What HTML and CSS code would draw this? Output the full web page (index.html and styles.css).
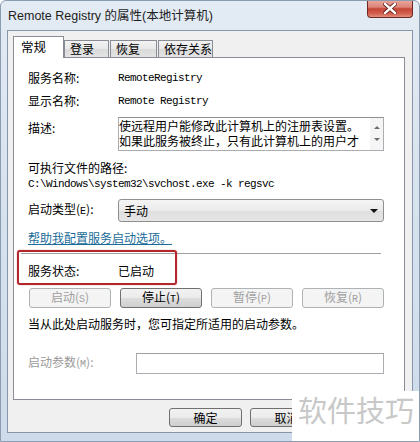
FILE: index.html
```html
<!DOCTYPE html>
<html lang="zh-CN">
  <head>
    <meta charset="UTF-8" />
    <title>Remote Registry 的属性</title>
    <link rel="stylesheet" href="styles.css">
  </head>
  <body>
    <div class="window">
      <div class="titlebar">
        <span class="title">Remote Registry 的属性(本地计算机)</span>
        <span class="close">
          <svg width="14" height="11" viewBox="0 0 14 11">
            <path d="M2 1 L12 10 M12 1 L2 10" stroke="#5a1a14" stroke-width="4" stroke-linecap="square" />
            <path d="M2 1 L12 10 M12 1 L2 10" stroke="#fff" stroke-width="2.4" stroke-linecap="square" />
          </svg>
        </span>
      </div>

      <div class="client">
        <div class="tabs">
          <div class="tab active">常规</div>
          <div class="tab t-login">登录</div>
          <div class="tab t-recover">恢复</div>
          <div class="tab t-deps">依存关系</div>
        </div>

        <div class="panel">
          <div class="row r-name">
            <span class="label">服务名称:</span>
            <span class="mono">RemoteRegistry</span>
          </div>
          <div class="row r-display">
            <span class="label">显示名称:</span>
            <span class="mono">Remote Registry</span>
          </div>
          <div class="row r-desc">
            <span class="label">描述:</span>
            <div class="textbox">
              <div class="textbox-text">
                <div class="text-line">使远程用户能修改此计算机上的注册表设置。</div>
                <div class="text-line">如果此服务被终止，只有此计算机上的用户才</div>
              </div>
              <div class="scroll">
                <span class="arrow-up"></span>
                <span class="arrow-down"></span>
              </div>
            </div>
          </div>
          <div class="row r-pathlabel">可执行文件的路径:</div>
          <div class="row r-path mono">C:\Windows\system32\svchost.exe -k regsvc</div>
          <div class="row r-type">
            <span class="label">启动类型(<span class="mono-inline">E</span>):</span>
            <div class="combo">
              <span>手动</span>
              <span class="arrow-down dark"></span>
            </div>
          </div>
          <div class="row r-link"><a class="link">帮助我配置服务启动选项。</a></div>
          <div class="separator"></div>
          <div class="row r-status">
            <span class="label">服务状态:</span>
            <span>已启动</span>
          </div>
          <div class="buttons">
            <button class="btn disabled">启动(<span class="mono-inline">S</span>)</button>
            <button class="btn">停止(<span class="mono-inline">T</span>)</button>
            <button class="btn disabled">暂停(<span class="mono-inline">P</span>)</button>
            <button class="btn disabled">恢复(<span class="mono-inline">R</span>)</button>
          </div>
          <div class="row r-hint">当从此处启动服务时，您可指定所适用的启动参数。</div>
          <div class="row r-params">
            <span class="label grey">启动参数(<span class="mono-inline">M</span>):</span>
            <div class="input"></div>
          </div>

          <div class="highlight"></div>
        </div>

        <div class="footer">
          <button class="btn big">确定</button>
          <button class="btn big">取消</button>
        </div>
      </div>

      <div class="watermark">软件技巧</div>
    </div>
  </body>
</html>
```

FILE: styles.css
```css
* {
  box-sizing: border-box;
}

body {
  margin: 0;
  background-color: #fff;
  font-family: "Noto Sans CJK SC", "Liberation Sans", sans-serif;
  font-size: 12px;
  color: #000;
}

.window {
  position: relative;
  width: 420px;
  height: 442px;
  overflow: hidden;
  background: linear-gradient(180deg, #e3ebf4 0%, #d8e3ef 40%, #cddbea 100%);
  border: 1px solid #8c9cb0;
  border-radius: 6px 6px 0 0;
}

/* 标题栏 */
.titlebar {
  display: flex;
  justify-content: space-between;
  align-items: flex-start;
  height: 29px;
  padding-left: 7px;
}

.title {
  font-family: "Liberation Sans", "Noto Sans CJK SC", sans-serif;
  font-size: 12.5px;
  line-height: 30px;
  color: #1e1e1e;
}

.close {
  display: flex;
  align-items: center;
  justify-content: center;
  width: 46px;
  height: 18px;
  margin-right: 6px;
  margin-top: -1px;
  background: linear-gradient(180deg, #e9aa9f 0%, #dd8377 42%, #c54536 52%, #d4604f 80%, #e38f7c 100%);
  border: 1px solid #6d2a22;
  border-top: none;
  border-radius: 0 0 4px 4px;
}

/* 客户区 */
.client {
  width: 406px;
  height: 403px;
  margin-left: 6px;
  background-color: #f0f0f0;
  border: 1px solid #8796aa;
}

.tabs {
  display: flex;
  align-items: flex-end;
  height: 26px;
  padding-left: 5px;
  padding-top: 4px;
}

.tab {
  height: 17px;
  padding-left: 5px;
  line-height: 16px;
  background: linear-gradient(180deg, #f3f3f3 0%, #e8e8e8 50%, #dadada 51%, #e4e4e4 100%);
  border: 1px solid #898c95;
  border-bottom: none;
  margin-left: 1px;
}

.tab.active {
  position: relative;
  z-index: 1;
  width: 51px;
  height: 22px;
  margin-left: 0;
  margin-bottom: -1px;
  padding-left: 7px;
  line-height: 20px;
  background: #fff;
  font-size: 12.5px;
}

.t-login {
  width: 45px;
  margin-left: 0;
}

.t-recover {
  width: 47px;
}

.t-deps {
  width: 55px;
}

/* 常规面板 */
.panel {
  position: relative;
  width: 392px;
  height: 343px;
  margin-left: 5px;
  padding-left: 14px;
  background-color: #fff;
  border: 1px solid #898c95;
}

.row {
  display: flex;
  align-items: center;
  height: 16px;
  line-height: 16px;
  white-space: nowrap;
}

.label {
  width: 90px;
  flex-shrink: 0;
}

.mono {
  font-family: "Liberation Mono", monospace;
  font-size: 11px;
  letter-spacing: -0.6px;
}

.mono-inline {
  font-family: "Liberation Mono", monospace;
  font-size: 10px;
}

.r-name {
  margin-top: 12px;
}

.r-display {
  margin-top: 7px;
}

.r-desc {
  align-items: flex-start;
  height: 34px;
  margin-top: 8px;
}

.r-desc .label {
  padding-top: 3px;
}

.textbox {
  display: flex;
  width: 266px;
  height: 34px;
  border: 1px solid #abadb3;
  border-top-color: #8e8f8f;
}

.textbox-text {
  flex: 1;
  overflow: hidden;
}

.text-line {
  height: 15px;
  font-size: 12px;
  line-height: 15px;
  overflow: hidden;
}

.scroll {
  display: flex;
  flex-direction: column;
  align-items: center;
  justify-content: space-between;
  width: 13px;
  padding: 8px 0 9px;
  background-color: #f5f5f5;
}

.arrow-up {
  width: 0;
  height: 0;
  border-left: 3px solid transparent;
  border-right: 3px solid transparent;
  border-bottom: 3px solid #6e6e6e;
}

.arrow-down {
  width: 0;
  height: 0;
  border-left: 3px solid transparent;
  border-right: 3px solid transparent;
  border-top: 3px solid #6e6e6e;
}

.arrow-down.dark {
  border-left-width: 4px;
  border-right-width: 4px;
  border-top: 4px solid #111;
}

.r-pathlabel {
  margin-top: 9px;
}

.r-type {
  height: 23px;
  margin-top: 7px;
}

.combo {
  display: flex;
  align-items: center;
  justify-content: space-between;
  width: 266px;
  height: 23px;
  padding: 0 5px 0 5px;
  background: linear-gradient(180deg, #f4f4f4 0%, #ebebeb 50%, #dedede 51%, #e6e6e6 100%);
  border: 1px solid #8e8f8f;
  border-radius: 3px;
}

.r-link {
  margin-top: 8px;
}

.link {
  color: #1b6c98;
  text-decoration: underline;
}

.separator {
  width: 360px;
  height: 2px;
  margin-top: 7px;
  margin-left: -7px;
  border-top: 1px solid #a0a0a0;
  border-bottom: 1px solid #fff;
}

.r-status {
  margin-top: 8px;
}

.buttons {
  display: flex;
  gap: 9px;
  height: 20px;
  margin-top: 9px;
  margin-left: 1px;
}

.btn {
  width: 82px;
  height: 20px;
  padding: 0;
  font-family: "Noto Sans CJK SC", sans-serif;
  font-size: 12px;
  line-height: 16px;
  color: #000;
  background: linear-gradient(180deg, #f2f2f2 0%, #ebebeb 50%, #dddddd 51%, #cfcfcf 100%);
  border: 1px solid #707070;
  border-radius: 3px;
}

.btn.disabled {
  color: #a0a0a0;
  background: #f4f4f4;
  border-color: #adb2b5;
}

.r-hint {
  margin-top: 8px;
}

.r-params {
  height: 20px;
  margin-top: 21px;
}

.r-params .label {
  width: 108px;
}

.grey {
  color: #9a9a9a;
}

.input {
  width: 248px;
  height: 21px;
  border: 1px solid #abadb3;
  border-top-color: #a0a0a0;
}

/* 红框标注 */
.highlight {
  position: absolute;
  left: 3px;
  top: 192px;
  width: 160px;
  height: 35px;
  border: 2px solid #b3262c;
  border-radius: 3px;
  box-shadow: 0 0 1px #b3262c;
}

/* 底部按钮 */
.footer {
  display: flex;
  gap: 8px;
  margin-top: 8px;
  margin-left: 161px;
}

.btn.big {
  width: 73px;
  height: 19px;
  line-height: 15px;
}

/* 水印 */
.watermark {
  position: absolute;
  right: -1px;
  bottom: -1px;
  width: 128px;
  height: 51px;
  padding-left: 6px;
  padding-top: 1px;
  background-color: #fff;
  color: #c8c8c8;
  font-size: 29px;
  line-height: 34px;
}
```
